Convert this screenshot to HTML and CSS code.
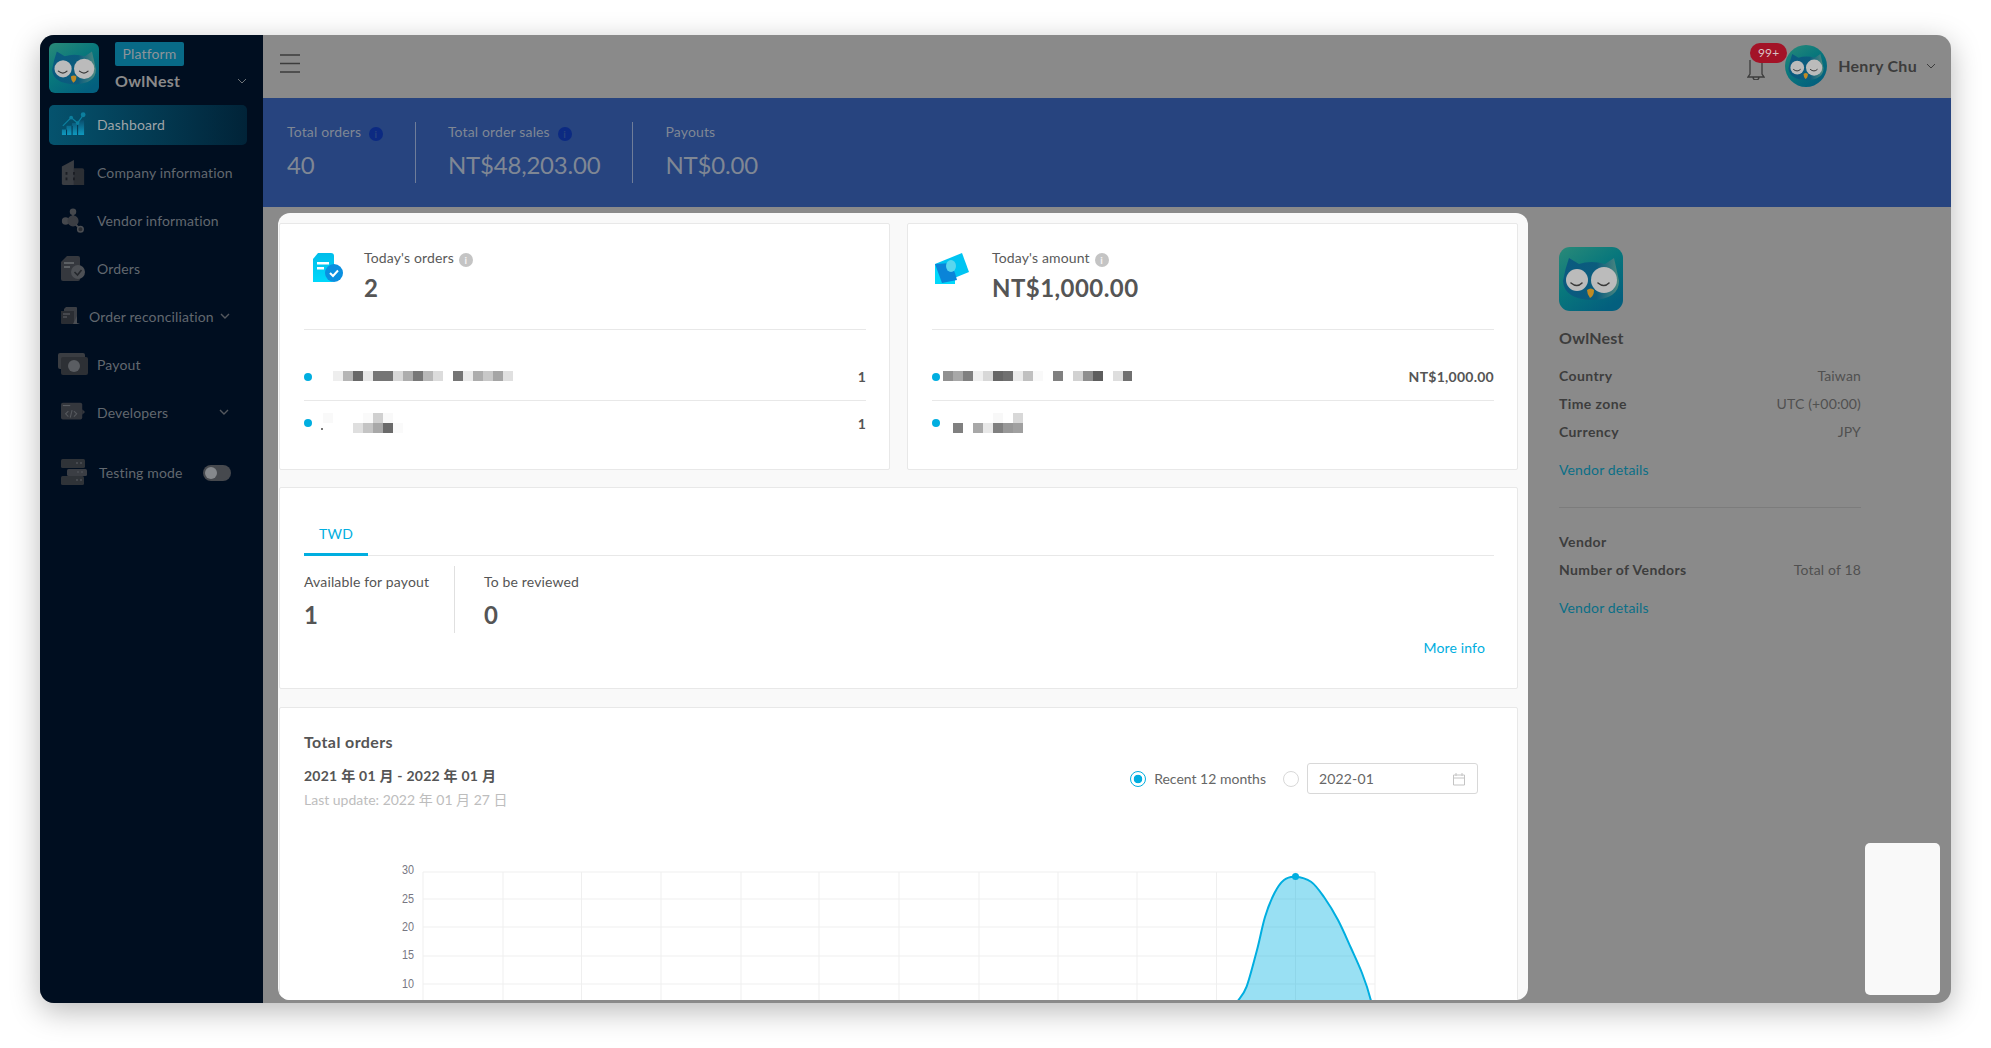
FILE: index.html
```html
<!DOCTYPE html>
<html lang="en">
<head>
  <meta charset="UTF-8">
  <meta name="viewport" content="width=device-width, initial-scale=1.0">
  <title>OwlNest Dashboard</title>
  <link rel="stylesheet" href="styles.css">
</head>
<body>
  <svg class="defs" width="0" height="0" aria-hidden="true">
    <defs>
      <linearGradient id="owl-bg" x1="0" y1="0" x2="0.7" y2="1">
        <stop offset="0" stop-color="#2a8a78"/>
        <stop offset="0.5" stop-color="#08777c"/>
        <stop offset="1" stop-color="#035f7e"/>
      </linearGradient>
      <linearGradient id="owl-body" x1="0" y1="0" x2="1" y2="0">
        <stop offset="0" stop-color="#0a5a80"/>
        <stop offset="0.6" stop-color="#0b5c7d"/>
        <stop offset="1" stop-color="#4f8a80"/>
      </linearGradient>
      <linearGradient id="bars-grad" x1="0" y1="0" x2="0" y2="1">
        <stop offset="0" stop-color="#0a4f6e"/>
        <stop offset="1" stop-color="#0f9ac0"/>
      </linearGradient>
      <linearGradient id="blue-grad" x1="0" y1="0" x2="0" y2="1">
        <stop offset="0" stop-color="#00bdea"/>
        <stop offset="1" stop-color="#00d8fb"/>
      </linearGradient>
      <symbol id="owl" viewBox="0 0 64 64">
        <path d="M10 11 L20 17 Q32 13 46 17 L55 11 Q58 24 60 34 Q60 52 33 53 Q5 52 4 34 Q6 22 10 11Z" fill="url(#owl-body)"/>
        <circle cx="18" cy="33" r="11" fill="#bbbbbb"/>
        <circle cx="45" cy="33" r="13" fill="#bbbbbb"/>
        <path d="M12 36 Q18 41 23 36 M39 36 Q45 41 50 36" fill="none" stroke="#3a3a3a" stroke-width="1.6" stroke-linecap="round"/>
        <path d="M28 43 Q32 40 35 43 Q35 49 31 51 Q28 47 28 43Z" fill="#bf8a24"/>
      </symbol>
    </defs>
  </svg>

  <div class="window">
    <!-- Sidebar -->
    <aside class="sidebar">
      <div class="brand">
        <svg class="brand-logo"><rect width="50" height="50" rx="6" fill="url(#owl-bg)"/><use href="#owl" width="50" height="50"/></svg>
        <div class="brand-text">
          <span class="brand-badge">Platform</span>
          <div class="brand-name">
            <span>OwlNest</span>
            <svg class="chevron" viewBox="0 0 10 6"><path d="M1 1l4 4 4-4" fill="none" stroke="#6e7378" stroke-width="1"/></svg>
          </div>
        </div>
      </div>

      <nav class="nav">
        <a class="nav-item active">
          <svg class="nav-icon" viewBox="0 0 26 26">
            <path d="M1 25V19h5v-4h6v-3h6V9h7v16z" fill="url(#bars-grad)"/>
            <path d="M6 19v6M12 15v10M18 12v13" stroke="#02304a" stroke-width="1"/>
            <path d="M2 15l9-9 7 6 7-10" fill="none" stroke="#0c7f9e" stroke-width="1.4"/>
            <circle cx="11" cy="6" r="2" fill="#0c7f9e"/><circle cx="18" cy="12" r="2" fill="#0c7f9e"/><circle cx="24" cy="3" r="2.6" fill="#0c7f9e"/>
          </svg>
          <span>Dashboard</span>
        </a>
        <a class="nav-item">
          <svg class="nav-icon" viewBox="0 0 24 28">
            <path d="M0 8l13-7v27H2a2 2 0 0 1-2-2z" fill="#3a3d42"/>
            <path d="M13 10h9a2 2 0 0 1 2 2v16H13z" fill="#2c2f34"/>
            <path d="M4 14h2v3H4zM4 20h2v3H4zM12 14h2v3h-2zM12 20h2v3h-2z" fill="#1b1e24"/>
          </svg>
          <span>Company information</span>
        </a>
        <a class="nav-item">
          <svg class="nav-icon" viewBox="0 0 24 28">
            <circle cx="12" cy="5" r="3.5" fill="#45484d"/>
            <path d="M12 6v9" stroke="#45484d" stroke-width="2"/>
            <circle cx="4" cy="15" r="4" fill="#45484d"/>
            <circle cx="12" cy="15" r="6" fill="#3b3e44"/>
            <path d="M15 19l4 4" stroke="#45484d" stroke-width="2"/>
            <circle cx="20" cy="24" r="3" fill="#2a2d32" stroke="#4b4e53" stroke-width="1.6"/>
          </svg>
          <span>Vendor information</span>
        </a>
        <a class="nav-item">
          <svg class="nav-icon" viewBox="0 0 24 26">
            <path d="M0 7l6-6h11a2 2 0 0 1 2 2v21a2 2 0 0 1-2 2H2a2 2 0 0 1-2-2z" fill="#35383e"/>
            <path d="M3 8h10M3 12h6" stroke="#6a6d72" stroke-width="1.6"/>
            <circle cx="17" cy="17" r="7" fill="#4d5055"/>
            <path d="M13.500 17l3 3 4-5" fill="none" stroke="#25282d" stroke-width="1.6"/>
          </svg>
          <span>Orders</span>
        </a>
        <a class="nav-item nav-item-sub">
          <svg class="nav-icon" viewBox="0 0 20 20">
            <path d="M3 3l2-2h10a1 1 0 0 1 1 1v15a1 1 0 0 1-1 1H4a1 1 0 0 1-1-1z" fill="#3b3e44"/>
            <path d="M0 5h13v13H1a1 1 0 0 1-1-1z" fill="#2a2d33"/>
            <path d="M2 8h7M2 11h4" stroke="#62656a" stroke-width="1.2"/>
            <path d="M16 10v7l3 1H12z" fill="#4b4e53"/>
          </svg>
          <span>Order reconciliation</span>
          <svg class="chevron chevron-nav" viewBox="0 0 10 6"><path d="M1 1l4 4 4-4" fill="none" stroke="#54585e" stroke-width="1.4"/></svg>
        </a>
        <a class="nav-item">
          <svg class="nav-icon nav-icon-wide" viewBox="0 0 30 22">
            <rect x="0" y="0" width="27" height="16" rx="2" fill="#3a3d42"/>
            <rect x="3" y="4" width="27" height="18" rx="2" fill="#2d3035"/>
            <circle cx="16" cy="13" r="6" fill="#5a5d62"/>
          </svg>
          <span>Payout</span>
        </a>
        <a class="nav-item">
          <svg class="nav-icon" viewBox="0 0 26 20">
            <rect x="0" y="0" width="23" height="18" rx="2" fill="#34373d"/>
            <path d="M2 3h8" stroke="#5a5d62" stroke-width="1.2"/>
            <path d="M8 9l-3 3 3 3M12 8l-2 8M14 9l3 3-3 3" fill="none" stroke="#56595e" stroke-width="1.2"/>
            <path d="M23 7l3 3-3 3z" fill="#34373d"/>
          </svg>
          <span>Developers</span>
          <svg class="chevron chevron-nav" viewBox="0 0 10 6"><path d="M1 1l4 4 4-4" fill="none" stroke="#54585e" stroke-width="1.4"/></svg>
        </a>
        <div class="nav-item nav-test">
          <svg class="nav-icon nav-icon-test" viewBox="0 0 26 26">
            <rect x="0" y="0" width="24" height="9" rx="1.5" fill="#2f3338"/>
            <rect x="6" y="10" width="20" height="7" rx="1.5" fill="#3b3e44"/>
            <rect x="0" y="17" width="23" height="9" rx="1.5" fill="#2f3338"/>
            <path d="M15 4h2M19 4h2M16 13h2M20 13h2M15 21h2M19 21h2" stroke="#4d5055" stroke-width="1.4"/>
          </svg>
          <span>Testing mode</span>
          <span class="toggle"><span class="toggle-knob"></span></span>
        </div>
      </nav>
    </aside>

    <div class="content">
      <!-- Top bar -->
      <header class="topbar">
        <svg class="burger" viewBox="0 0 20 19"><path d="M0 1h20M0 9.500h20M0 18h20" stroke="#3c3c3c" stroke-width="1.6"/></svg>
        <div class="user">
          <div class="bell">
            <svg viewBox="0 0 18 20" width="18" height="20"><path d="M3 0v14L1 17h16l-2-3V0M6 17a3 3 0 0 0 6 0" fill="none" stroke="#3c3c3c" stroke-width="1.3"/></svg>
            <span class="bell-badge">99+</span>
          </div>
          <svg class="avatar"><rect width="42" height="42" fill="url(#owl-bg)"/><use href="#owl" x="1" y="2" width="40" height="40"/></svg>
          <span class="user-name">Henry Chu</span>
          <svg class="chevron" viewBox="0 0 10 6"><path d="M1 1l4 4 4-4" fill="none" stroke="#3c3c3c" stroke-width="1"/></svg>
        </div>
      </header>

      <!-- Stats band -->
      <section class="stats">
        <div class="stat">
          <div class="stat-label">Total orders <span class="info-dot">i</span></div>
          <div class="stat-value">40</div>
        </div>
        <div class="stat">
          <div class="stat-label">Total order sales <span class="info-dot">i</span></div>
          <div class="stat-value">NT$48,203.00</div>
        </div>
        <div class="stat">
          <div class="stat-label">Payouts</div>
          <div class="stat-value">NT$0.00</div>
        </div>
      </section>

      <div class="main-area">
        <main class="panel">
          <div class="card-row">
            <section class="card summary">
              <div class="summary-head">
                <svg class="summary-icon" viewBox="0 0 60 32">
                  <path d="M9 7l5-6h13a3 3 0 0 1 3 3v24a2 2 0 0 1-2 2H9z" fill="url(#blue-grad)"/>
                  <path d="M13 10h12v2.500H13zM13 15h7v2.500h-7z" fill="#fff"/>
                  <circle cx="30" cy="21" r="9" fill="#0a8fe0"/>
                  <path d="M26 21l3 3 5-5.500" fill="none" stroke="#fff" stroke-width="2"/>
                </svg>
                <div>
                  <div class="summary-label">Today's orders <span class="info-dot info-light">i</span></div>
                  <div class="summary-value">2</div>
                </div>
              </div>
              <div class="rows">
                <div class="row">
                  <span class="dot"></span>
                  <svg class="mosaic" width="199" height="24" shape-rendering="crispEdges">
                    <rect x="19" y="6" width="10" height="10" fill="#eeeeee"/><rect x="29" y="6" width="10" height="10" fill="#b5b5b5"/><rect x="39" y="6" width="10" height="10" fill="#686868"/><rect x="49" y="6" width="10" height="10" fill="#e8e8e8"/>
                    <rect x="59" y="6" width="20" height="10" fill="#757575"/><rect x="79" y="6" width="10" height="10" fill="#d8d8d8"/>
                    <rect x="89" y="6" width="10" height="10" fill="#adadad"/><rect x="99" y="6" width="10" height="10" fill="#777777"/><rect x="109" y="6" width="10" height="10" fill="#b8b8b8"/><rect x="119" y="6" width="10" height="10" fill="#dcdcdc"/>
                    <rect x="139" y="6" width="10" height="10" fill="#757575"/><rect x="149" y="6" width="10" height="10" fill="#ebebeb"/><rect x="159" y="6" width="10" height="10" fill="#adadad"/><rect x="169" y="6" width="10" height="10" fill="#c8c8c8"/><rect x="179" y="6" width="10" height="10" fill="#a5a5a5"/><rect x="189" y="6" width="10" height="10" fill="#e0e0e0"/>
                  </svg>
                  <span class="row-count">1</span>
                </div>
                <div class="row row-last">
                  <span class="dot"></span>
                  <svg class="mosaic" width="100" height="24" shape-rendering="crispEdges">
                    <rect x="9" y="2" width="10" height="10" fill="#f9f9f9"/><rect x="7" y="17" width="2" height="2" fill="#777777"/>
                    <rect x="49" y="2" width="10" height="10" fill="#fafafa"/><rect x="59" y="2" width="10" height="10" fill="#d0d0d0"/><rect x="69" y="2" width="10" height="10" fill="#f9f9f9"/>
                    <rect x="39" y="12" width="10" height="10" fill="#dfdfdf"/><rect x="49" y="12" width="10" height="10" fill="#c4c4c4"/><rect x="59" y="12" width="10" height="10" fill="#a8a8a8"/><rect x="69" y="12" width="10" height="10" fill="#6a6a6a"/><rect x="79" y="12" width="10" height="10" fill="#fafafa"/>
                  </svg>
                  <span class="row-count">1</span>
                </div>
              </div>
            </section>

            <section class="card summary">
              <div class="summary-head">
                <svg class="summary-icon" viewBox="0 0 60 32">
                  <path d="M3 12L30 1l7 19-27 11z" fill="#00c4f2"/>
                  <path d="M3 12h20v20H3z" fill="#00d8fb"/>
                  <path d="M3 12l17-1 5 17-15 3z" fill="#0a84d8"/>
                  <ellipse cx="19" cy="14" rx="5" ry="6" fill="#5ad6ee"/>
                </svg>
                <div>
                  <div class="summary-label">Today's amount <span class="info-dot info-light">i</span></div>
                  <div class="summary-value">NT$1,000.00</div>
                </div>
              </div>
              <div class="rows">
                <div class="row">
                  <span class="dot"></span>
                  <svg class="mosaic" width="190" height="24" shape-rendering="crispEdges">
                    <rect x="1" y="6" width="10" height="10" fill="#909090"/><rect x="11" y="6" width="10" height="10" fill="#a8a8a8"/><rect x="21" y="6" width="10" height="10" fill="#808080"/><rect x="31" y="6" width="10" height="10" fill="#f0f0f0"/><rect x="41" y="6" width="10" height="10" fill="#d8d8d8"/>
                    <rect x="51" y="6" width="10" height="10" fill="#666666"/><rect x="61" y="6" width="10" height="10" fill="#707070"/><rect x="71" y="6" width="10" height="10" fill="#ebebeb"/><rect x="81" y="6" width="10" height="10" fill="#c0c0c0"/><rect x="91" y="6" width="10" height="10" fill="#f9f9f9"/>
                    <rect x="111" y="6" width="10" height="10" fill="#808080"/><rect x="131" y="6" width="10" height="10" fill="#d2d2d2"/><rect x="141" y="6" width="10" height="10" fill="#8e8e8e"/><rect x="151" y="6" width="10" height="10" fill="#5d5d5d"/>
                    <rect x="171" y="6" width="10" height="10" fill="#dedede"/><rect x="181" y="6" width="9" height="10" fill="#707070"/>
                  </svg>
                  <span class="row-count">NT$1,000.00</span>
                </div>
                <div class="row row-last">
                  <span class="dot"></span>
                  <svg class="mosaic" width="90" height="24" shape-rendering="crispEdges">
                    <rect x="51" y="2" width="10" height="10" fill="#f8f8f8"/><rect x="71" y="2" width="10" height="10" fill="#d8d8d8"/>
                    <rect x="11" y="12" width="10" height="10" fill="#808080"/><rect x="31" y="12" width="10" height="10" fill="#a8a8a8"/><rect x="41" y="12" width="10" height="10" fill="#e8e8e8"/><rect x="51" y="12" width="10" height="10" fill="#808080"/><rect x="61" y="12" width="10" height="10" fill="#989898"/><rect x="71" y="12" width="10" height="10" fill="#a0a0a0"/>
                  </svg>
                </div>
              </div>
            </section>
          </div>

          <section class="card balance-card">
            <div class="tabs"><span class="tab">TWD</span></div>
            <div class="balance">
              <div class="balance-item">
                <div class="balance-label">Available for payout</div>
                <div class="balance-value">1</div>
              </div>
              <div class="balance-item">
                <div class="balance-label">To be reviewed</div>
                <div class="balance-value">0</div>
              </div>
            </div>
            <div class="more-info">More info</div>
          </section>

          <section class="card chart-card">
            <div class="chart-head">
              <div>
                <h2 class="chart-title">Total orders</h2>
                <div class="chart-range">2021 年 01 月 - 2022 年 01 月</div>
                <div class="chart-update">Last update: 2022 年 01 月 27 日</div>
              </div>
              <div class="chart-filter">
                <span class="radio radio-on"></span>
                <span class="filter-label">Recent 12 months</span>
                <span class="radio"></span>
                <div class="date-input">
                  <span>2022-01</span>
                  <svg viewBox="0 0 14 14" width="14" height="14"><path d="M1.500 3h11v10h-11zM1.500 6h11M4 1v3M10 1v3" fill="none" stroke="#c4c4c4" stroke-width="1"/></svg>
                </div>
              </div>
            </div>
            <svg class="chart" viewBox="280 860 1237 145" width="1237" height="145">
              <g class="chart-grid">
                <path d="M423 872H1375M423 899H1375M423 927H1375M423 956H1375M423 984H1375"/>
                <path d="M423 872V1005M503 872V1005M581.500 872V1005M661 872V1005M741 872V1005M819 872V1005M899 872V1005M979 872V1005M1058 872V1005M1137 872V1005M1216.500 872V1005M1295.500 872V1005M1375 872V1005"/>
              </g>
              <g class="chart-axis">
                <text x="414" y="874" text-anchor="end" textLength="12" lengthAdjust="spacingAndGlyphs">30</text>
                <text x="414" y="903" text-anchor="end" textLength="12" lengthAdjust="spacingAndGlyphs">25</text>
                <text x="414" y="931" text-anchor="end" textLength="12" lengthAdjust="spacingAndGlyphs">20</text>
                <text x="414" y="959" text-anchor="end" textLength="12" lengthAdjust="spacingAndGlyphs">15</text>
                <text x="414" y="988" text-anchor="end" textLength="12" lengthAdjust="spacingAndGlyphs">10</text>
              </g>
              <path class="chart-area" d="M1238.500 1000C1239.900 997.800 1243.500 995 1246.600 986.700C1249.700 978.400 1253.900 961.600 1257 950C1260.100 938.400 1262.100 926.500 1265 917C1267.900 907.500 1271.300 899.200 1274.500 893C1277.700 886.800 1280.600 882.700 1284 880C1287.400 877.300 1290.500 876.400 1295 876.700C1299.500 877 1306.200 878.300 1311 881.700C1315.800 885.100 1319.500 890.600 1324 897C1328.500 903.400 1333.500 911.500 1338 920C1342.500 928.500 1347 939.200 1351 948C1355 956.800 1358.600 964.300 1362 973C1365.400 981.700 1369 992 1372 1005H1236Z"/>
              <circle cx="1295.500" cy="876.500" r="3.500" fill="#00aee0"/>
            </svg>
          </section>
        </main>

        <!-- Vendor info -->
        <aside class="side-info">
          <svg class="side-logo"><rect width="64" height="64" rx="11" fill="url(#owl-bg)"/><use href="#owl" width="64" height="64"/></svg>
          <div class="side-title">OwlNest</div>
          <dl class="side-list">
            <div class="side-row"><dt>Country</dt><dd>Taiwan</dd></div>
            <div class="side-row"><dt>Time zone</dt><dd>UTC (+00:00)</dd></div>
            <div class="side-row"><dt>Currency</dt><dd>JPY</dd></div>
          </dl>
          <a class="side-link">Vendor details</a>
          <hr class="side-line">
          <dl class="side-list side-list-2">
            <div class="side-row"><dt>Vendor</dt></div>
            <div class="side-row"><dt>Number of Vendors</dt><dd>Total of 18</dd></div>
          </dl>
          <a class="side-link">Vendor details</a>
        </aside>
      </div>
    </div>

    <div class="float-box"></div>
  </div>
</body>
</html>
```

FILE: styles.css
```css
* {
  box-sizing: border-box;
}
body {
  margin: 0;
  height: 1048px;
  overflow: hidden;
  background-color: #fff;
  font-family: Lato, "Noto Sans CJK TC", sans-serif;
  font-size: 14px;
  letter-spacing: 0.15px;
  color: #555;
}
.defs {
  position: absolute;
}
.window {
  position: relative;
  display: flex;
  margin: 35px 40px 0;
  height: 968px;
  border-radius: 14px;
  overflow: hidden;
  background-color: #8a8a8a;
  box-shadow: 0 8px 30px rgba(0, 0, 0, 0.28);
}

/* Sidebar */
.sidebar {
  flex: none;
  width: 223px;
  padding: 7px 16px 0 9px;
  background-color: #000e20;
  color: #62686f;
}
.brand {
  display: flex;
  gap: 16px;
}
.brand-logo {
  flex: none;
  width: 50px;
  height: 50px;
  margin-top: 1px;
}
.brand-text {
  flex: 1;
}
.brand-badge {
  display: block;
  width: 69px;
  height: 24px;
  line-height: 23px;
  text-align: center;
  border-radius: 2px;
  background-color: #086a87;
  color: #8d949a;
}
.brand-name {
  display: flex;
  justify-content: space-between;
  align-items: center;
  margin-top: 5px;
  line-height: 20px;
  font-size: 16px;
  font-weight: 700;
  letter-spacing: 0.3px;
  color: #8a8a8a;
}
.chevron {
  flex: none;
  width: 10px;
  height: 6px;
}
.nav {
  margin-top: 12px;
}
.nav-item {
  display: flex;
  align-items: center;
  gap: 12px;
  height: 40px;
  margin-bottom: 8px;
  padding: 0 0 2px 12px;
  border-radius: 5px;
  white-space: nowrap;
}
.nav-item.active {
  background: linear-gradient(90deg, #05536e, #012338);
  color: #9ea4a8;
}
.nav-icon {
  flex: none;
  width: 24px;
  height: 26px;
  overflow: visible;
}
.nav-item-sub {
  gap: 6px;
}
.nav-item-sub .nav-icon {
  width: 20px;
  height: 20px;
  margin-right: 2px;
}
.nav-icon-wide {
  width: 30px;
  height: 22px;
  margin-left: -3px;
  margin-right: -3px;
}
.nav-icon-test {
  width: 26px;
}
.nav-test {
  margin-top: 20px;
  padding-right: 16px;
}
.chevron-nav {
  margin-left: auto;
  margin-right: 18px;
}
.toggle {
  position: relative;
  margin: 2px 0 0 auto;
  width: 28px;
  height: 16px;
  border-radius: 8px;
  background-color: #46494e;
}
.toggle-knob {
  position: absolute;
  top: 2px;
  left: 2px;
  width: 12px;
  height: 12px;
  border-radius: 50%;
  background-color: #85888c;
}

/* Top bar */
.content {
  flex: 1;
  display: flex;
  flex-direction: column;
  min-width: 0;
}
.topbar {
  flex: none;
  display: flex;
  justify-content: space-between;
  align-items: center;
  height: 63px;
  padding: 0 15px 0 17px;
}
.burger {
  width: 20px;
  height: 19px;
  margin-top: -7px;
}
.user {
  display: flex;
  align-items: center;
  padding-bottom: 1px;
}
.bell {
  position: relative;
  width: 18px;
  height: 20px;
  margin: 7px 20px 0 0;
}
.bell-badge {
  position: absolute;
  top: -17px;
  left: 3px;
  width: 37px;
  height: 20px;
  line-height: 20px;
  text-align: center;
  border-radius: 10px;
  background-color: #a31327;
  color: #d8c4c6;
  font-size: 12px;
}
.avatar {
  width: 42px;
  height: 42px;
  border-radius: 50%;
}
.user-name {
  margin: 0 9px 0 11px;
  padding-bottom: 2px;
  font-size: 16px;
  font-weight: 700;
  letter-spacing: 0.3px;
  color: #3c3c3c;
}

/* Stats band */
.stats {
  flex: none;
  display: flex;
  align-items: center;
  height: 109px;
  padding-left: 24px;
  background-color: #27447f;
  color: #7f8794;
}
.stat {
  height: 61px;
  padding-right: 32px;
  margin-right: 32px;
  border-right: 1px solid #6f7d99;
}
.stat:last-child {
  border-right: none;
}
.stat-label {
  line-height: 20px;
}
.stat-value {
  margin-top: 8px;
  line-height: 30px;
  font-size: 24px;
  letter-spacing: -0.2px;
}
.info-dot {
  display: inline-block;
  width: 14px;
  height: 14px;
  margin-left: 4px;
  line-height: 14px;
  text-align: center;
  vertical-align: -1px;
  border-radius: 50%;
  background-color: #0c2a82;
  color: #27447f;
  font-size: 10px;
  font-weight: 700;
  letter-spacing: 0;
}
.info-light {
  background-color: #c4c4c4;
  color: #f4f4f4;
  margin-left: 1px;
}

/* Panel */
.main-area {
  flex: 1;
  display: flex;
  min-height: 0;
}
.panel {
  flex: none;
  width: 1250px;
  height: 787px;
  margin: 6px 0 0 15px;
  padding: 10px 10px 0 1px;
  border-radius: 12px;
  background-color: #f9f9f9;
  overflow: hidden;
}
.card {
  border: 1px solid #e8e8e8;
  border-radius: 2px;
  background-color: #fff;
}
.card-row {
  display: flex;
  gap: 17px;
}
.summary {
  flex: 1;
  height: 247px;
  padding: 24px 23px 0 24px;
}
.summary-head {
  display: flex;
  height: 82px;
  border-bottom: 1px solid #e8e8e8;
}
.summary-icon {
  flex: none;
  width: 60px;
  height: 32px;
  margin-top: 4px;
}
.summary-label {
  line-height: 20px;
  color: #5a5a5a;
}
.summary-value {
  margin-top: 5px;
  line-height: 30px;
  font-size: 24px;
  font-weight: 700;
  letter-spacing: 0.45px;
  color: #555;
}
.rows {
  padding-top: 23px;
}
.row {
  display: flex;
  align-items: center;
  height: 48px;
  border-bottom: 1px solid #e8e8e8;
}
.row-last {
  height: 44px;
  border-bottom: none;
}
.dot {
  flex: none;
  width: 8px;
  height: 8px;
  margin-right: 2px;
  border-radius: 50%;
  background-color: #00aee0;
}
.mosaic {
  flex: none;
}
.row-count {
  margin-left: auto;
  font-weight: 700;
  letter-spacing: 0.25px;
  color: #555;
}
.balance-card {
  height: 202px;
  margin-top: 17px;
  padding: 36px 23px 0 24px;
}
.tabs {
  height: 32px;
  border-bottom: 1px solid #e8e8e8;
}
.tab {
  display: block;
  width: 64px;
  height: 32px;
  line-height: 20px;
  text-align: center;
  border-bottom: 3px solid #00aee0;
  color: #00aee0;
}
.balance {
  display: flex;
  height: 67px;
  margin-top: 10px;
}
.balance-item {
  padding-top: 6px;
}
.balance-item:first-child {
  width: 151px;
  margin-right: 29px;
  border-right: 1px solid #e0e0e0;
}
.balance-label {
  line-height: 20px;
}
.balance-value {
  margin-top: 8px;
  line-height: 30px;
  font-size: 24px;
  font-weight: 700;
}
.more-info {
  margin-top: 5px;
  padding-right: 9px;
  line-height: 20px;
  text-align: right;
  color: #00aee0;
}
.chart-card {
  margin-top: 18px;
  height: 320px;
}
.chart-head {
  display: flex;
  justify-content: space-between;
  height: 102px;
  padding: 24px 39px 0 24px;
}
.chart-title {
  margin: 0;
  line-height: 20px;
  font-size: 16px;
  font-weight: 700;
  letter-spacing: 0.4px;
  color: #555;
}
.chart-range {
  margin-top: 14px;
  line-height: 20px;
  font-weight: 700;
  letter-spacing: 0.25px;
  color: #555;
}
.chart-update {
  margin-top: 4px;
  line-height: 20px;
  letter-spacing: 0;
  color: #bdbdbd;
}
.chart-filter {
  display: flex;
  align-items: center;
  height: 31px;
  margin-top: 31px;
}
.radio {
  width: 16px;
  height: 16px;
  margin-right: 8px;
  border: 1px solid #d8d8d8;
  border-radius: 50%;
}
.radio-on {
  border-color: #00aee0;
  background: radial-gradient(circle, #00aee0 0 4px, #fff 4.6px);
}
.filter-label {
  margin-right: 17px;
  letter-spacing: 0;
  color: #666;
}
.date-input {
  display: flex;
  justify-content: space-between;
  align-items: center;
  width: 171px;
  height: 31px;
  padding: 0 11px;
  border: 1px solid #d8d8d8;
  border-radius: 3px;
  color: #666;
}
.chart {
  display: block;
  margin-top: 50px;
}
.chart-grid path {
  fill: none;
  stroke: #efefef;
  stroke-width: 1;
}
.chart-axis text {
  font-family: "Liberation Sans", sans-serif;
  font-size: 12px;
  letter-spacing: 0;
  fill: #777782;
}
.chart-area {
  fill: rgba(0, 178, 226, 0.4);
  stroke: #00aee0;
  stroke-width: 2;
}

/* Vendor info */
.side-info {
  flex: 1;
  padding: 40px 90px 0 31px;
  color: #3d3d3d;
}
.side-logo {
  display: block;
  width: 64px;
  height: 64px;
}
.side-title {
  margin-top: 17px;
  line-height: 20px;
  font-size: 16px;
  font-weight: 700;
  letter-spacing: 0.2px;
}
.side-list {
  margin: 13px 0 0;
}
.side-list-2 {
  margin-top: 19px;
}
.side-row {
  display: flex;
  justify-content: space-between;
  align-items: center;
  height: 28px;
}
.side-row dt {
  font-weight: 700;
  letter-spacing: 0.4px;
}
.side-row dd {
  margin: 0;
  color: #505050;
}
.side-link {
  display: block;
  margin-top: 15px;
  line-height: 20px;
  color: #0a6f87;
}
.side-line {
  margin: 27px 0 0;
  border: none;
  border-top: 1px solid #7c7c7c;
}

.float-box {
  position: absolute;
  right: 11px;
  bottom: 8px;
  width: 75px;
  height: 152px;
  border-radius: 5px;
  background-color: #f9f9f9;
}
```
